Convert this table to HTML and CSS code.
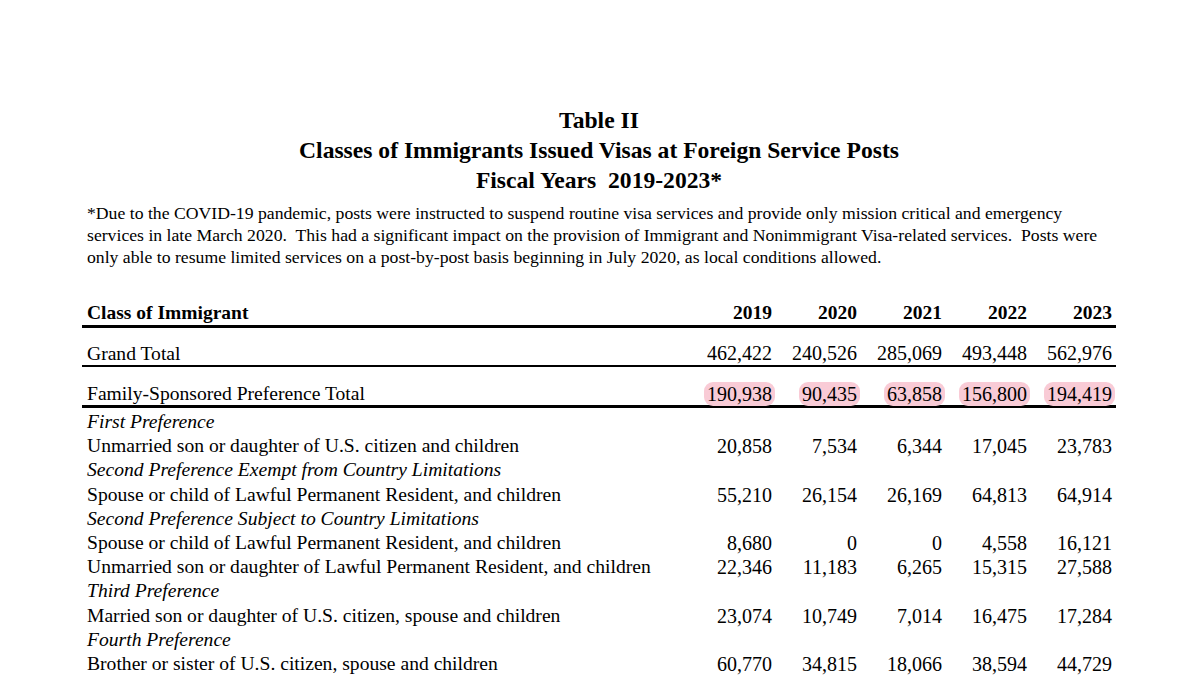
FILE: index.html
```html
<!DOCTYPE html>
<html lang="en">
<head>
<meta charset="utf-8">
<title>Table II</title>
<link rel="stylesheet" href="styles.css">
</head>
<body>
<div class="page">
  <div class="title">
    <div>Table II</div>
    <div>Classes of Immigrants Issued Visas at Foreign Service Posts</div>
    <div>Fiscal Years&nbsp; 2019-2023*</div>
  </div>
  <p class="note">*Due to the COVID-19 pandemic, posts were instructed to suspend routine visa services and provide only mission critical and emergency services in late March 2020.&nbsp; This had a significant impact on the provision of Immigrant and Nonimmigrant Visa-related services.&nbsp; Posts were only able to resume limited services on a post-by-post basis beginning in July 2020, as local conditions allowed.</p>
  <div class="table">
    <div class="row head">
      <span class="label">Class of Immigrant</span>
      <span class="num">2019</span><span class="num">2020</span><span class="num">2021</span><span class="num">2022</span><span class="num">2023</span>
    </div>
    <div class="row grand">
      <span class="label">Grand Total</span>
      <span class="num">462,422</span><span class="num">240,526</span><span class="num">285,069</span><span class="num">493,448</span><span class="num">562,976</span>
    </div>
    <div class="row family">
      <span class="label">Family-Sponsored Preference Total</span>
      <span class="num"><mark class="hl">190,938</mark></span><span class="num"><mark class="hl">90,435</mark></span><span class="num"><mark class="hl">63,858</mark></span><span class="num"><mark class="hl">156,800</mark></span><span class="num"><mark class="hl">194,419</mark></span>
    </div>
    <div class="body">
      <div class="row sub"><span class="label">First Preference</span></div>
      <div class="row">
        <span class="label">Unmarried son or daughter of U.S. citizen and children</span>
        <span class="num">20,858</span><span class="num">7,534</span><span class="num">6,344</span><span class="num">17,045</span><span class="num">23,783</span>
      </div>
      <div class="row sub"><span class="label">Second Preference Exempt from Country Limitations</span></div>
      <div class="row">
        <span class="label">Spouse or child of Lawful Permanent Resident, and children</span>
        <span class="num">55,210</span><span class="num">26,154</span><span class="num">26,169</span><span class="num">64,813</span><span class="num">64,914</span>
      </div>
      <div class="row sub"><span class="label">Second Preference Subject to Country Limitations</span></div>
      <div class="row">
        <span class="label">Spouse or child of Lawful Permanent Resident, and children</span>
        <span class="num">8,680</span><span class="num">0</span><span class="num">0</span><span class="num">4,558</span><span class="num">16,121</span>
      </div>
      <div class="row">
        <span class="label">Unmarried son or daughter of Lawful Permanent Resident, and children</span>
        <span class="num">22,346</span><span class="num">11,183</span><span class="num">6,265</span><span class="num">15,315</span><span class="num">27,588</span>
      </div>
      <div class="row sub"><span class="label">Third Preference</span></div>
      <div class="row">
        <span class="label">Married son or daughter of U.S. citizen, spouse and children</span>
        <span class="num">23,074</span><span class="num">10,749</span><span class="num">7,014</span><span class="num">16,475</span><span class="num">17,284</span>
      </div>
      <div class="row sub"><span class="label">Fourth Preference</span></div>
      <div class="row">
        <span class="label">Brother or sister of U.S. citizen, spouse and children</span>
        <span class="num">60,770</span><span class="num">34,815</span><span class="num">18,066</span><span class="num">38,594</span><span class="num">44,729</span>
      </div>
    </div>
  </div>
</div>
</body>
</html>
```
FILE: styles.css
```css
html, body {
  margin: 0;
  padding: 0;
  background: #ffffff;
}
body {
  font-family: "Liberation Serif", "Times New Roman", serif;
  color: #000000;
  overflow: hidden;
  height: 691px;
}
.page {
  width: 1034px;
  margin-left: 82px;
  padding-top: 105px;
}
.title {
  text-align: center;
  font-weight: bold;
  font-size: 23.6px;
  line-height: 30px;
}
.note {
  margin: 7px 0 0 0;
  padding-left: 5px;
  font-size: 17.7px;
  line-height: 22px;
}
.table {
  margin-top: 33px;
  font-size: 20px;
}
.row {
  display: grid;
  grid-template-columns: 1fr repeat(5, 85px);
  padding: 0 4px 0 5px;
  line-height: 24.2px;
}
.num {
  text-align: right;
  white-space: nowrap;
}
.label {
  white-space: nowrap;
  font-size: 19.6px;
}
.head {
  font-weight: bold;
  font-size: 19.5px;
  line-height: 24px;
  border-bottom: 3px solid #000;
}
.head .label {
  font-size: 19.5px;
}
.grand {
  padding-top: 14px;
  line-height: 23px;
  border-bottom: 2.5px solid #000;
}
.family {
  padding-top: 16px;
  line-height: 22px;
  border-bottom: 3px solid #000;
}
.body {
  padding-top: 2px;
}
.sub .label {
  font-style: italic;
}
.hl {
  background: #f9cbd6;
  color: #000;
  border-radius: 9px;
  padding: 1px 3px;
  margin-right: -3px;
}
```
